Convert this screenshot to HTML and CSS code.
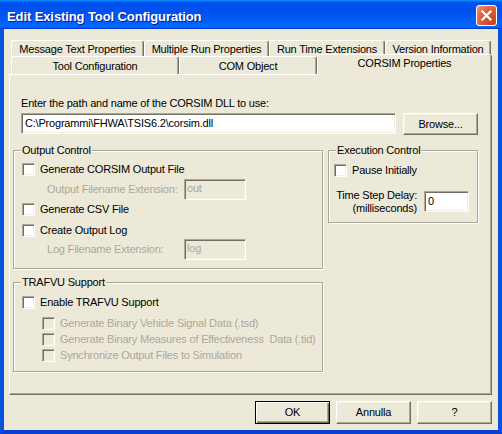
FILE: index.html
```html
<!DOCTYPE html>
<html>
<head>
<meta charset="utf-8">
<title>Edit Existing Tool Configuration</title>
<link rel="stylesheet" href="styles.css">
</head>
<body>
<div class="window">
  <div class="titlebar">
    <span class="title">Edit Existing Tool Configuration</span>
    <span class="close"><svg width="19" height="19" viewBox="0 0 19 19"><path d="M5.5 5.5 L13.5 13.5 M13.5 5.5 L5.5 13.5" stroke="#fff" stroke-width="2.2" stroke-linecap="square"/></svg></span>
  </div>
  <div class="client">
    <div class="tabrow back">
      <div class="tab w1">Message Text Properties</div>
      <div class="tab w2">Multiple Run Properties</div>
      <div class="tab w3">Run Time Extensions</div>
      <div class="tab w4">Version Information</div>
    </div>
    <div class="tabrow front">
      <div class="tab w5">Tool Configuration</div>
      <div class="tab w6">COM Object</div>
      <div class="tab sel w7">CORSIM Properties</div>
    </div>
    <div class="panel">
      <div class="prompt">Enter the path and name of the CORSIM DLL to use:</div>
      <div class="pathrow">
        <div class="field path">C:\Programmi\FHWA\TSIS6.2\corsim.dll</div>
        <div class="btn browse">Browse...</div>
      </div>
      <div class="groups">
        <div class="leftcol">
          <div class="group output">
            <div class="legend">Output Control</div>
            <div class="cbrow r1"><span class="cb"></span><span>Generate CORSIM Output File</span></div>
            <div class="fieldrow r2"><span class="flabel">Output Filename Extension:</span><div class="field small disabled">out</div></div>
            <div class="cbrow r3"><span class="cb"></span><span>Generate CSV File</span></div>
            <div class="cbrow r4"><span class="cb"></span><span>Create Output Log</span></div>
            <div class="fieldrow r5"><span class="flabel">Log Filename Extension:</span><div class="field small disabled">log</div></div>
          </div>
          <div class="group trafvu">
            <div class="legend">TRAFVU Support</div>
            <div class="cbrow enable"><span class="cb"></span><span>Enable TRAFVU Support</span></div>
            <div class="cbrow sub first dis"><span class="cb"></span><span>Generate Binary Vehicle Signal Data (.tsd)</span></div>
            <div class="cbrow sub dis"><span class="cb"></span><span>Generate Binary Measures of Effectiveness&nbsp; Data (.tid)</span></div>
            <div class="cbrow sub dis"><span class="cb"></span><span>Synchronize Output Files to Simulation</span></div>
          </div>
        </div>
        <div class="group exec">
          <div class="legend">Execution Control</div>
          <div class="cbrow pause"><span class="cb"></span><span>Pause Initially</span></div>
          <div class="delayrow">
            <div class="dlabel">Time Step Delay:<br>(milliseconds)</div>
            <div class="field delay">0</div>
          </div>
        </div>
      </div>
    </div>
    <div class="buttons">
      <div class="btn default">OK</div>
      <div class="btn">Annulla</div>
      <div class="btn">?</div>
    </div>
  </div>
</div>
</body>
</html>
```
FILE: styles.css
```css
* { box-sizing: border-box; }
body {
  margin: 0;
  font: 11px/13px "Liberation Sans", Arial, sans-serif;
  letter-spacing: -0.2px;
  color: #000;
  background: #fff;
}
.window {
  width: 502px;
  height: 434px;
  display: flex;
  flex-direction: column;
}
.titlebar {
  height: 29px;
  flex: none;
  display: flex;
  align-items: flex-start;
  justify-content: space-between;
  padding: 0 5px 0 7px;
  background: linear-gradient(180deg, #0997ff, #0053ee 8%, #0050ee 40%, #0066ff 88%, #0066ff 93%, #005bff 95%, #003dd7 96%, #003dd7);
}
.title {
  margin-top: 10px;
  color: #fff;
  font-weight: bold;
  font-size: 13px;
  letter-spacing: -0.1px;
  text-shadow: 1px 1px 0 #0a1883;
}
.close {
  margin-top: 5px;
  width: 21px;
  height: 21px;
  border: 1px solid #fff;
  border-radius: 3px;
  background: radial-gradient(circle at 85% 85%, #c9421c 0%, #db5a33 50%, #e57c5c 80%, #f0a88f 100%);
  display: flex;
  align-items: center;
  justify-content: center;
}
.close svg { display: block; }
.client {
  flex: 1;
  display: flex;
  flex-direction: column;
  background: #ece9d8;
  border-left: 4px solid #0855dd;
  border-right: 4px solid #0855dd;
  border-bottom: 4px solid #0841d2;
  box-shadow: 0 1px 0 #001e8b;
  padding: 11px 6px 0 5px;
}
.tabrow {
  display: flex;
  align-items: flex-start;
  padding-left: 2px;
}
.tab {
  text-align: center;
  white-space: nowrap;
  background: #ece9d8;
  border-top: 1px solid #fff;
  border-left: 1px solid #fff;
  border-right: 1px solid #716f64;
  border-radius: 3px 3px 0 0;
  box-shadow: inset -1px 0 0 #aca899;
}
.back .tab { height: 16px; padding-top: 2px; }
.front .tab { height: 18px; padding-top: 3px; }
.front .tab.sel {
  height: 21px;
  margin-top: -2px;
  margin-bottom: -1px;
  padding-top: 2px;
  position: relative;
  z-index: 1;
}
.w1 { width: 133px; }
.w2 { width: 125px; }
.w3 { width: 116px; }
.w4 { width: 106px; }
.w5 { width: 168px; }
.w6 { width: 138px; }
.w7 { width: 175px; }
.panel {
  height: 321px;
  flex: none;
  border-top: 1px solid #fff;
  border-left: 1px solid #fff;
  border-right: 1px solid #716f64;
  border-bottom: 1px solid #716f64;
  box-shadow: inset -1px -1px 0 #aca899;
}
.prompt {
  margin: 22px 0 0 11px;
}
.pathrow {
  display: flex;
  gap: 7px;
  margin: 3px 0 0 11px;
  align-items: flex-start;
}
.field {
  height: 21px;
  background: #fff;
  border: 1px solid;
  border-color: #aca899 #fff #fff #aca899;
  box-shadow: inset 1px 1px 0 #716f64, inset -1px -1px 0 #f1efe2;
  padding-left: 3px;
  display: flex;
  align-items: center;
  white-space: nowrap;
}
.field.path { width: 375px; }
.field.disabled {
  background: #ece9d8;
  color: #aca899;
  padding-left: 2px;
  align-items: flex-start;
  padding-top: 2px;
}
.field.small { width: 62px; }
.btn {
  width: 75px;
  height: 23px;
  display: flex;
  align-items: center;
  justify-content: center;
  background: #ece9d8;
  border: 1px solid;
  border-color: #fff #716f64 #716f64 #fff;
  box-shadow: inset -1px -1px 0 #aca899, inset 1px 1px 0 #f1efe2;
}
.btn.browse { height: 22px; }
.btn.default {
  border: 1px solid #000;
  box-shadow: inset 1px 1px 0 #fff, inset -1px -1px 0 #716f64, inset -2px -2px 0 #aca899;
}
.groups {
  display: flex;
  gap: 5px;
  margin-top: 15px;
  padding-left: 3px;
  align-items: flex-start;
}
.leftcol {
  display: flex;
  flex-direction: column;
}
.group {
  border: 1px solid #aca899;
  box-shadow: inset 1px 1px 0 #fff, 1px 1px 0 #fff;
  padding-left: 8px;
}
.legend {
  margin: -7px 0 0 -1px;
  padding: 0 1px;
  background: #ece9d8;
  width: fit-content;
}
.output { width: 310px; height: 119px; }
.trafvu { width: 310px; height: 90px; margin-top: 13px; }
.exec { width: 150px; height: 73px; padding-left: 5px; }
.exec .legend { margin-left: 2px; }
.cbrow {
  display: flex;
  align-items: center;
  gap: 5px;
  height: 17px;
  white-space: nowrap;
}
.cb {
  flex: none;
  width: 13px;
  height: 13px;
  background: #fff;
  border: 1px solid;
  border-color: #aca899 #fff #fff #aca899;
  box-shadow: inset 1px 1px 0 #716f64, inset -1px -1px 0 #f1efe2;
}
.r1 { margin-top: 4px; }
.fieldrow {
  display: flex;
  align-items: center;
  height: 21px;
  margin-left: 25px;
  color: #aca899;
}
.flabel { width: 137px; white-space: nowrap; }
.r2 { margin-top: 1px; }
.r3 { margin-top: 1px; }
.r4 { margin-top: 4px; }
.enable { margin-top: 5px; }
.sub { height: 15px; margin-top: 1px; margin-left: 20px; }
.sub.first { margin-top: 5px; }
.dis { color: #aca899; }
.dis .cb { background: #ece9d8; }
.pause { margin-top: 5px; }
.delayrow {
  display: flex;
  align-items: center;
  height: 21px;
  margin-top: 12px;
  padding-left: 2px;
  gap: 7px;
}
.dlabel {
  width: 81px;
  text-align: right;
  white-space: nowrap;
}
.field.delay { width: 45px; padding-left: 3px; }
.buttons {
  display: flex;
  justify-content: flex-end;
  gap: 6px;
  margin-top: 6px;
}
```
